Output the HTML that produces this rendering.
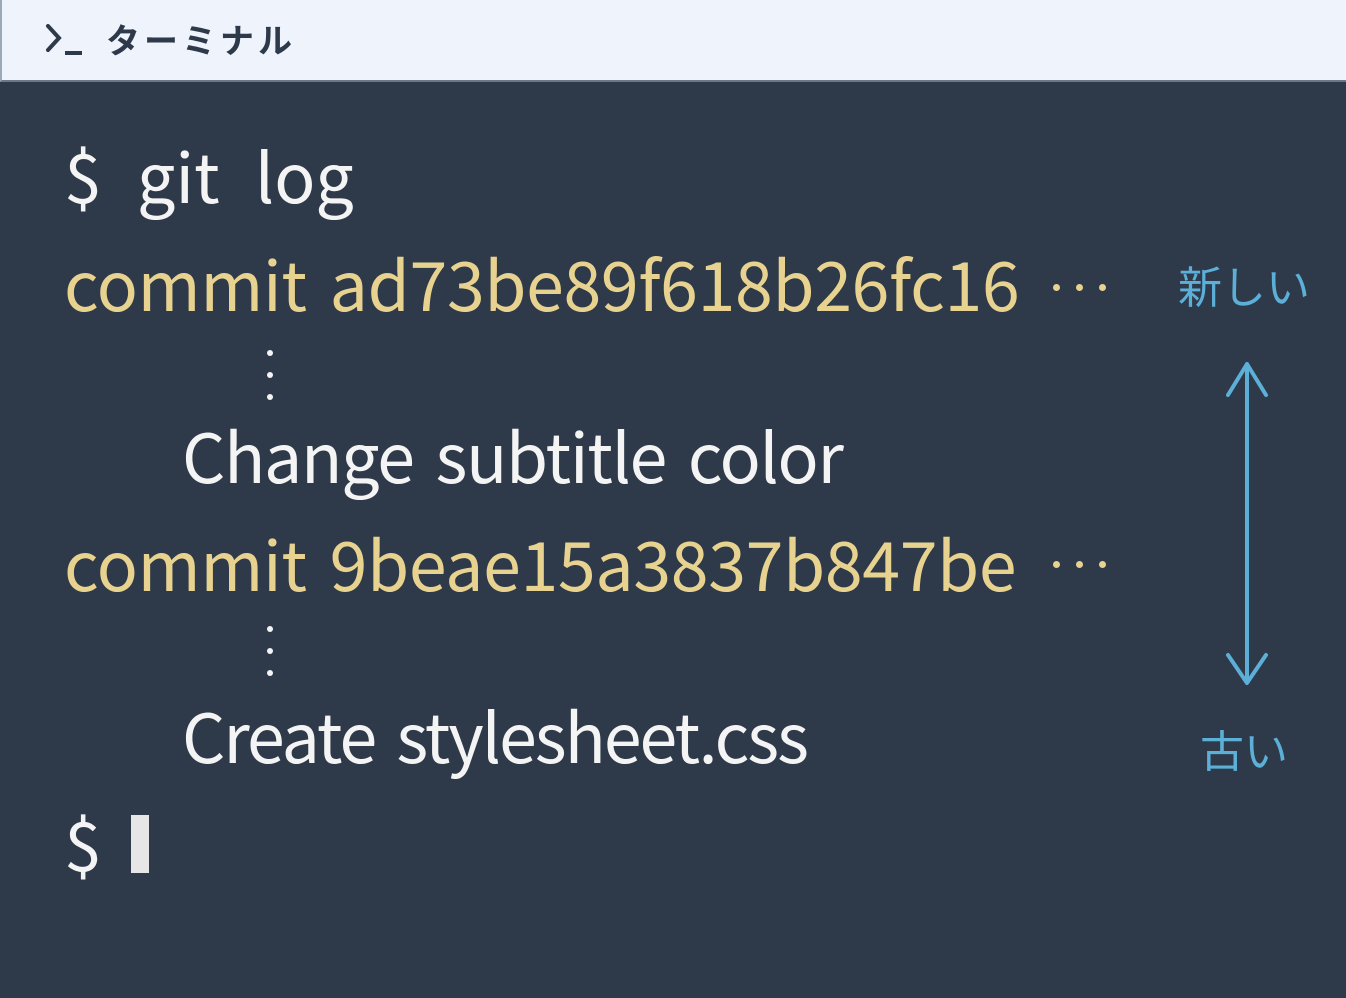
<!DOCTYPE html>
<html><head><meta charset="utf-8"><style>
body{margin:0;width:1346px;height:998px;overflow:hidden;background:#2e3a4a;font-family:"Noto Sans CJK JP","Liberation Sans",sans-serif;}
.hdr{position:absolute;left:0;top:0;width:1346px;height:82px;background:#eff3fb;border-left:2px solid #9aa8b8;border-bottom:2px solid #6b7888;box-sizing:border-box;}
.hdr span{position:absolute;left:104px;top:14px;font-size:34px;font-weight:bold;color:#2e3a4a;letter-spacing:4px;}
.t{position:absolute;white-space:pre;font-size:68px;line-height:1;color:#f4f4f4;word-spacing:8px;}
.y{color:#e8d28f}
.dots{position:absolute;width:6px;}
.dots i{display:block;width:6px;height:6px;border-radius:3px;background:#f4f4f4;margin-bottom:16px;}
.hd{position:absolute;height:7px;}
.hd i{float:left;width:7px;height:7px;border-radius:4px;background:#e8d28f;margin-right:16px;}
.b{position:absolute;color:#5cb0d8;font-size:44px;line-height:1;white-space:pre;}
</style></head><body>
<div class="hdr">
<svg style="position:absolute;left:42px;top:22px" width="44" height="36" viewBox="0 0 44 36"><path d="M4 4 L15 16 L4 28" fill="none" stroke="#2e3a4a" stroke-width="4" stroke-linecap="round"/><path d="M21 31 H38" stroke="#2e3a4a" stroke-width="4"/></svg>
<span>ターミナル</span></div>
<div class="t" style="left:64px;top:140px;word-spacing:20px">$ git log</div>
<div class="t y" style="left:64px;top:248px;letter-spacing:-0.3px">commit ad73be89f618b26fc16</div>
<div class="hd" style="left:1053px;top:284px"><i></i><i></i><i></i></div>
<div class="dots" style="left:267px;top:350px"><i></i><i></i><i></i></div>
<div class="t" style="left:182px;top:420px;letter-spacing:-1.3px">Change subtitle color</div>
<div class="t y" style="left:64px;top:528px;letter-spacing:-0.3px">commit 9beae15a3837b847be</div>
<div class="hd" style="left:1053px;top:561px"><i></i><i></i><i></i></div>
<div class="dots" style="left:267px;top:626px"><i></i><i></i><i></i></div>
<div class="t" style="left:182px;top:700px;letter-spacing:-2px">Create stylesheet.css</div>
<div class="t" style="left:64px;top:808px">$</div>
<div style="position:absolute;left:131px;top:815px;width:18px;height:58px;background:#e6e6e6"></div>
<div class="b" style="left:1178px;top:262px">新しい</div>
<svg style="position:absolute;left:1220px;top:355px" width="56" height="335" viewBox="0 0 56 335"><path d="M27 9 V326 M8 40 L27 9 L46 40 M8 300 L27 328 L46 300" fill="none" stroke="#5cb0d8" stroke-width="4" stroke-linecap="round" stroke-linejoin="round"/></svg>
<div class="b" style="left:1200px;top:726px">古い</div>
</body></html>
